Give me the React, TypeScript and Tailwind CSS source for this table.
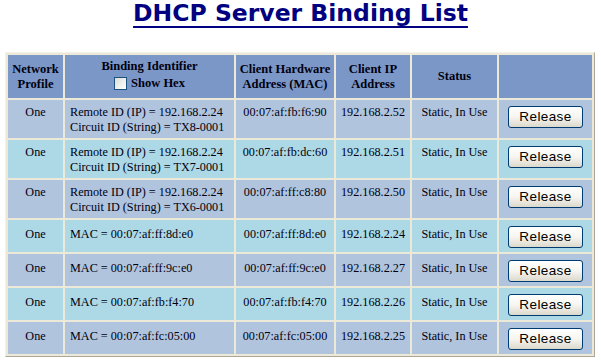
import React from "react";

type Row = {
  id: string[];
  mac: string;
  ip: string;
};

const rows: Row[] = [
  { id: ["Remote ID (IP) = 192.168.2.24", "Circuit ID (String) = TX8-0001"], mac: "00:07:af:fb:f6:90", ip: "192.168.2.52" },
  { id: ["Remote ID (IP) = 192.168.2.24", "Circuit ID (String) = TX7-0001"], mac: "00:07:af:fb:dc:60", ip: "192.168.2.51" },
  { id: ["Remote ID (IP) = 192.168.2.24", "Circuit ID (String) = TX6-0001"], mac: "00:07:af:ff:c8:80", ip: "192.168.2.50" },
  { id: ["MAC = 00:07:af:ff:8d:e0"], mac: "00:07:af:ff:8d:e0", ip: "192.168.2.24" },
  { id: ["MAC = 00:07:af:ff:9c:e0"], mac: "00:07:af:ff:9c:e0", ip: "192.168.2.27" },
  { id: ["MAC = 00:07:af:fb:f4:70"], mac: "00:07:af:fb:f4:70", ip: "192.168.2.26" },
  { id: ["MAC = 00:07:af:fc:05:00"], mac: "00:07:af:fc:05:00", ip: "192.168.2.25" },
];

function XpButton({ label }: { label: string }) {
  return (
    <button
      type="button"
      className="w-[75px] h-[22px] rounded-[3px] border border-[#003c74] bg-linear-to-b from-white via-[#f6f5f0] to-[#dcd8cc] text-[13.5px] leading-none tracking-[0.4px] text-black [font-family:'Liberation_Sans',Arial,sans-serif]"
    >
      {label}
    </button>
  );
}

function XpCheckbox() {
  return (
    <span className="inline-block w-[13px] h-[13px] border border-[#1c5180] bg-linear-to-br from-[#dcdcd7] to-white mr-[4px]" />
  );
}

export default function App() {
  return (
    <div className="w-[601px] h-[363px] bg-white overflow-hidden [font-family:'Liberation_Serif','Times_New_Roman',serif]">
      <div className="h-[27px] text-center text-[23.5px] leading-[27px] font-bold text-[#000080] [font-family:'DejaVu_Sans',Verdana,sans-serif]">
        <span className="underline overline underline-offset-[5px]">DHCP Server Binding List</span>
      </div>

      <table className="mt-[25px] ml-[5px] w-[590px] table-fixed border-separate border-spacing-[2px] bg-[#ece9d8] border border-t-[#f4f2e8] border-l-[#f4f2e8] border-b-[#aca899] border-r-[#aca899] text-[12.2px] leading-[15px] text-[#000010]">
        <thead>
          <tr className="h-[43px] bg-[#7b97c7] text-[12.5px]">
            <th className="w-[55px] p-0 align-middle text-center font-bold">
              Network
              <br />
              Profile
            </th>
            <th className="w-[169px] p-0 align-middle text-center font-bold">
              <div className="-mt-[3px]">Binding Identifier</div>
              <div className="mt-[2px] flex items-center justify-center">
                <XpCheckbox />
                <span>Show Hex</span>
              </div>
            </th>
            <th className="w-[98px] p-0 align-middle text-center font-bold">
              Client Hardware
              <br />
              Address (MAC)
            </th>
            <th className="w-[74px] p-0 align-middle text-center font-bold">
              Client IP
              <br />
              Address
            </th>
            <th className="w-[85px] p-0 align-middle text-center font-bold">Status</th>
            <th className="w-[93px] p-0" />
          </tr>
        </thead>
        <tbody>
          {rows.map((r, i) => {
            const double = r.id.length > 1;
            const bg = i % 2 === 0 ? "bg-[#b0c4de]" : "bg-[#add8e6]";
            const h = double ? "h-[38px]" : "h-[32px]";
            const pt = double ? "pt-[5px]" : "pt-[7px]";
            return (
              <tr key={i} className={`${bg} ${h}`}>
                <td className={`${pt} px-0 pb-0 align-top text-center`}>One</td>
                <td className={`${pt} pl-[5px] pr-0 pb-0 align-top text-left whitespace-nowrap`}>
                  {r.id.map((line, j) => (
                    <div key={j}>{line}</div>
                  ))}
                </td>
                <td className={`${pt} px-0 pb-0 align-top text-center whitespace-nowrap`}>{r.mac}</td>
                <td className={`${pt} px-0 pb-0 align-top text-center whitespace-nowrap`}>{r.ip}</td>
                <td className={`${pt} px-0 pb-0 align-top text-center whitespace-nowrap`}>Static, In Use</td>
                <td className="pt-[6px] px-0 pb-0 align-top text-center">
                  <XpButton label="Release" />
                </td>
              </tr>
            );
          })}
        </tbody>
      </table>
    </div>
  );
}
